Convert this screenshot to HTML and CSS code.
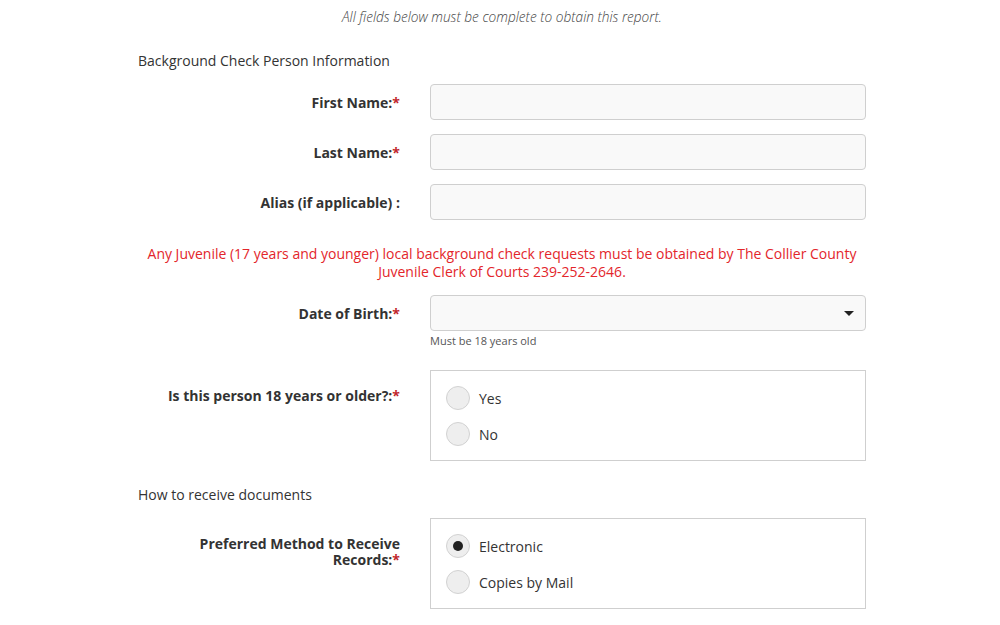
FILE: index.html
```html
<!DOCTYPE html>
<html>
<head>
<meta charset="utf-8">
<link rel="stylesheet" href="styles.css">
</head>
<body>
<div class="page">
  <p class="note">All fields below must be complete to obtain this report.</p>
  <h3 class="section first">Background Check Person Information</h3>

  <div class="row">
    <label class="lbl">First Name:<span class="req">*</span></label>
    <div class="field"><div class="input"></div></div>
  </div>
  <div class="row">
    <label class="lbl">Last Name:<span class="req">*</span></label>
    <div class="field"><div class="input"></div></div>
  </div>
  <div class="row">
    <label class="lbl">Alias (if applicable) :</label>
    <div class="field"><div class="input"></div></div>
  </div>

  <p class="warn">Any Juvenile (17 years and younger) local background check requests must be obtained by The Collier County Juvenile Clerk of Courts 239-252-2646.</p>

  <div class="row">
    <label class="lbl">Date of Birth:<span class="req">*</span></label>
    <div class="field">
      <div class="input select"><span class="caret"></span></div>
      <div class="help">Must be 18 years old</div>
    </div>
  </div>

  <div class="row radio-row age">
    <label class="lbl">Is this person 18 years or older?:<span class="req">*</span></label>
    <div class="field">
      <div class="radios">
        <div class="opt"><span class="dot"></span><span>Yes</span></div>
        <div class="opt"><span class="dot"></span><span>No</span></div>
      </div>
    </div>
  </div>

  <h3 class="section second">How to receive documents</h3>

  <div class="row radio-row">
    <label class="lbl">Preferred Method to Receive Records:<span class="req">*</span></label>
    <div class="field">
      <div class="radios">
        <div class="opt"><span class="dot on"></span><span>Electronic</span></div>
        <div class="opt"><span class="dot"></span><span>Copies by Mail</span></div>
      </div>
    </div>
  </div>
</div>
</body>
</html>
```

FILE: styles.css
```css
* { box-sizing: border-box; }
html, body { margin: 0; padding: 0; background: #fff; }
body {
  font-family: "Open Sans", "Liberation Sans", sans-serif;
  font-size: 14px;
  color: #333;
}
.page {
  width: 728px;
  margin-left: 138px;
  display: flex;
  flex-direction: column;
}
.note {
  margin: 7px 0 0;
  line-height: 20px;
  text-align: center;
  font-style: italic;
  font-weight: 300;
  font-size: 13.65px;
  color: #444;
}
.section {
  margin: 0;
  font-size: 14px;
  font-weight: 400;
  line-height: 20px;
  color: #333;
}
.section.first { margin-top: 24px; margin-bottom: 13px; }
.section.second { margin-top: 24px; margin-bottom: 13px; }
.row {
  display: grid;
  grid-template-columns: 262px 436px;
  column-gap: 30px;
  margin-bottom: 14px;
}
.lbl {
  text-align: right;
  font-weight: 700;
  line-height: 16px;
  padding-top: 11px;
  color: #333;
}
.req { color: #c1272d; }
.input {
  height: 36px;
  border: 1px solid #cfcfcf;
  border-radius: 4px;
  background: #f9f9f9;
}
.select {
  display: flex;
  align-items: center;
  justify-content: flex-end;
  padding-right: 11px;
}
.caret {
  width: 0;
  height: 0;
  border-left: 5px solid transparent;
  border-right: 5px solid transparent;
  border-top: 5px solid #222;
}
.help {
  margin-top: 3px;
  font-size: 11px;
  line-height: 14px;
  color: #555;
}
.warn {
  margin: 11px 0 14px;
  text-align: center;
  line-height: 18px;
  color: #e3262b;
  padding: 0 8px;
}
.row.age { margin-top: 8px; }
.radio-row .lbl { padding-top: 18px; }
.radio-row { margin-bottom: 0; }
.radios {
  border: 1px solid #cfcfcf;
  padding: 15px 15px 14px;
  display: flex;
  flex-direction: column;
  gap: 12px;
}
.opt {
  display: flex;
  align-items: center;
  gap: 9px;
  height: 24px;
  color: #333;
}
.dot {
  width: 24px;
  height: 24px;
  border-radius: 50%;
  border: 1px solid #d2d2d2;
  background: #eeeeee;
  display: flex;
  align-items: center;
  justify-content: center;
  flex: none;
}
.dot.on::after {
  content: "";
  width: 10px;
  height: 10px;
  border-radius: 50%;
  background: #222;
}
```
